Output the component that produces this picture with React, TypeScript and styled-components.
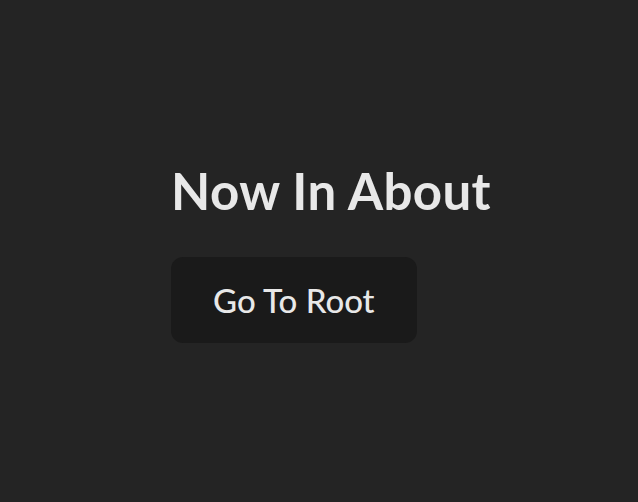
import React from 'react'
import styled, { createGlobalStyle } from 'styled-components'

const GlobalStyle = createGlobalStyle`
  html, body {
    margin: 0;
    padding: 0;
  }
  body {
    background-color: #242424;
    color: rgba(255, 255, 255, 0.87);
    font-family: Lato, "Noto Sans", Arial, sans-serif;
    -webkit-font-smoothing: antialiased;
  }
`

const Page = styled.div`
  min-height: 100vh;
  display: flex;
  align-items: center;
  justify-content: center;
  padding: 4px 0 0 24px;
  box-sizing: border-box;
`

const Content = styled.div`
  display: flex;
  flex-direction: column;
  align-items: flex-start;
  gap: 38px;
`

const Title = styled.h1`
  margin: 0;
  font-size: 51px;
  font-weight: 700;
  line-height: 1.1;
  letter-spacing: 0.4px;
  color: #e8e8e8;
`

const Button = styled.button`
  background-color: #1a1a1a;
  color: #e8e8e8;
  border: 1px solid transparent;
  border-radius: 12px;
  font-family: inherit;
  font-size: 33px;
  font-weight: 500;
  padding: 22px 41px;
  cursor: pointer;
`

const App = () => {
  return (
    <>
      <GlobalStyle />
      <Page>
        <Content>
          <Title>Now In About</Title>
          <Button>Go To Root</Button>
        </Content>
      </Page>
    </>
  )
}

export default App
